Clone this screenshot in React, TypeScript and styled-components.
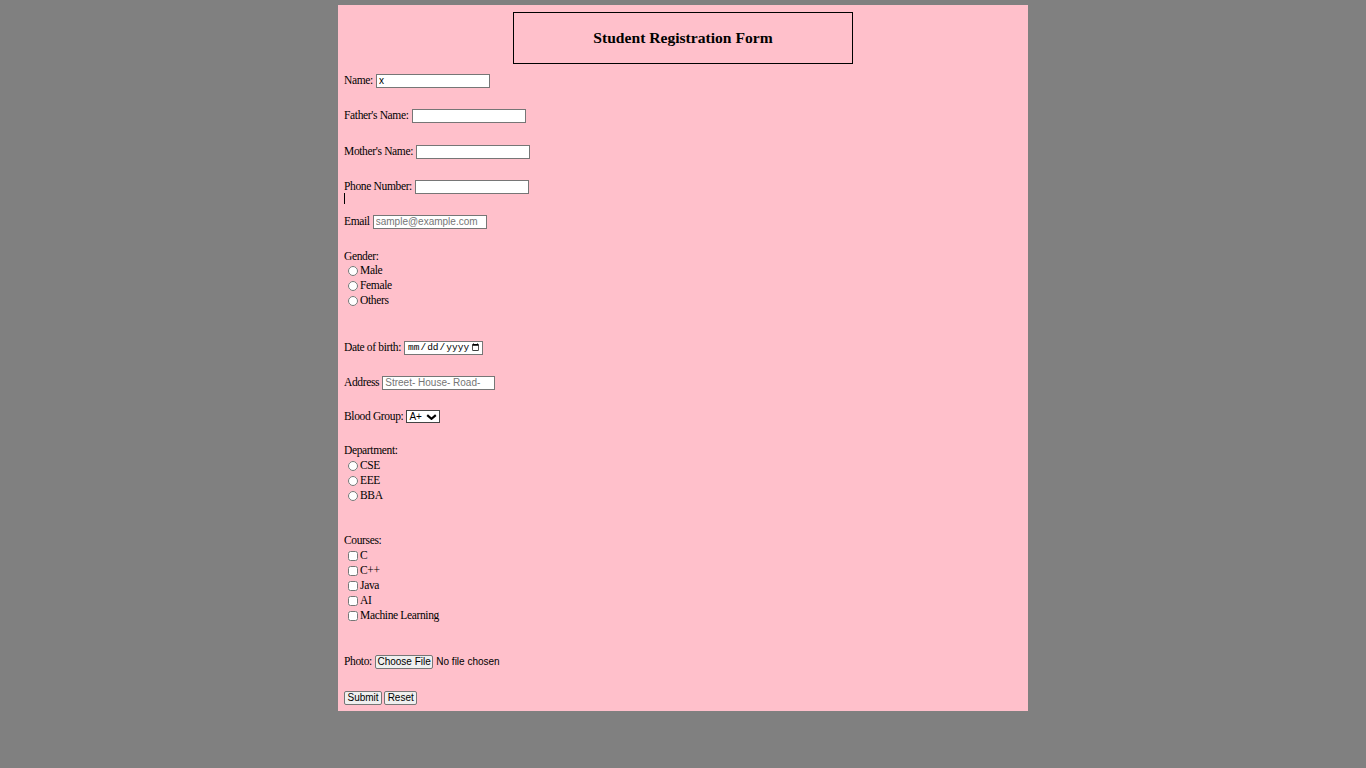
import * as React from "react";
import styled, { createGlobalStyle } from "styled-components";

const GlobalStyle = createGlobalStyle`
  html, body {
    margin: 0;
    padding: 0;
    background: #808080;
  }
  body {
    font-family: "Liberation Serif", "Times New Roman", serif;
    font-size: 11.5px;
    letter-spacing: -0.35px;
    color: #000;
  }
`;

const bloodGroups = ["A+", "A-", "B+", "B-", "O+", "O-", "AB+", "AB-"];
const genders = ["Male", "Female", "Others"];
const departments = ["CSE", "EEE", "BBA"];
const courses = ["C", "C++", "Java", "AI", "Machine Learning"];

export default function App() {
  return (
    <>
      <GlobalStyle />
      <Page>
        <TitleBox>
          <Title>Student Registration Form</Title>
        </TitleBox>
        <Form onSubmit={(e) => e.preventDefault()}>
          <Row $mt={9}>
            <Label>Name:</Label>
            <TextInput type="text" defaultValue="x" $w={114} />
          </Row>
          <Row $mt={20}>
            <Label>Father's Name:</Label>
            <TextInput type="text" $w={114} />
          </Row>
          <Row $mt={21}>
            <Label>Mother's Name:</Label>
            <TextInput type="text" $w={114} />
          </Row>
          <Row $mt={20}>
            <Label>Phone Number:</Label>
            <TextInput type="text" $w={114} />
          </Row>
          <Caret />
          <Row $mt={10}>
            <Label>Email</Label>
            <TextInput type="email" placeholder="sample@example.com" $w={114} />
          </Row>

          <GroupLabel $mt={20} $h={14}>Gender:</GroupLabel>
          {genders.map((g) => (
            <OptionRow key={g}>
              <Radio type="radio" name="gender" value={g} />
              <span>{g}</span>
            </OptionRow>
          ))}

          <Row $mt={32}>
            <Label>Date of birth:</Label>
            <DateInput type="date" />
          </Row>
          <Row $mt={20}>
            <Label>Address</Label>
            <TextInput type="text" placeholder="Street- House- Road-" $w={113} />
          </Row>
          <Row $mt={19}>
            <Label>Blood Group:</Label>
            <SelectWrap>
              <Select defaultValue="A+">
                {bloodGroups.map((b) => (
                  <option key={b}>{b}</option>
                ))}
              </Select>
              <Chevron viewBox="0 0 11 6" aria-hidden="true">
                <path d="M1.2 1.2 L5.5 4.8 L9.8 1.2" fill="none" stroke="#000" strokeWidth="2.2" />
              </Chevron>
            </SelectWrap>
          </Row>

          <GroupLabel $mt={19} $h={15}>Department:</GroupLabel>
          {departments.map((d) => (
            <OptionRow key={d}>
              <Radio type="radio" name="department" value={d} />
              <span>{d}</span>
            </OptionRow>
          ))}

          <GroupLabel $mt={30} $h={15}>Courses:</GroupLabel>
          {courses.map((c) => (
            <OptionRow key={c}>
              <Check type="checkbox" value={c} />
              <span>{c}</span>
            </OptionRow>
          ))}

          <Row $mt={31}>
            <Label>Photo:</Label>
            <FileInput type="file" />
          </Row>
          <Buttons $mt={21}>
            <Button type="submit">Submit</Button>
            <Button type="reset">Reset</Button>
          </Buttons>
        </Form>
      </Page>
    </>
  );
}

// styled components
const Page = styled.div`
  box-sizing: border-box;
  width: 690px;
  margin: 5px auto 0;
  padding: 7px 6px 6px;
  background: #ffc0cb;
`;

const TitleBox = styled.div`
  box-sizing: border-box;
  width: 340px;
  height: 52px;
  margin: 0 auto;
  border: 1px solid #000;
  display: flex;
  align-items: center;
  justify-content: center;
`;

const Title = styled.h3`
  margin: 0;
  font-size: 15.6px;
  font-weight: bold;
  letter-spacing: 0;
`;

const Form = styled.form`
  display: flex;
  flex-direction: column;
  align-items: flex-start;
`;

const Row = styled.div<{ $mt: number }>`
  display: flex;
  align-items: center;
  gap: 3px;
  height: 15px;
  margin-top: ${(p) => p.$mt}px;
  white-space: nowrap;
`;

const Label = styled.span`
  margin-bottom: 2px;
`;

const Buttons = styled(Row)`
  gap: 2px;
`;

const GroupLabel = styled.div<{ $mt: number; $h: number }>`
  height: ${(p) => p.$h}px;
  line-height: ${(p) => p.$h}px;
  margin-top: ${(p) => p.$mt}px;
`;

const OptionRow = styled.label`
  display: flex;
  align-items: center;
  height: 15px;
  line-height: 15px;
`;

const Caret = styled.span`
  display: block;
  width: 1px;
  height: 11px;
  margin-top: -1px;
  background: #000;
`;

const fieldBase = `
  box-sizing: border-box;
  height: 14px;
  margin: 0;
  padding: 0 2px;
  border: 1px solid #767676;
  background: #fff;
  font-family: "Liberation Sans", Arial, sans-serif;
  font-size: 10px;
  letter-spacing: 0;
  color: #000;
  &::placeholder {
    color: #757575;
  }
`;

const TextInput = styled.input<{ $w: number }>`
  ${fieldBase}
  width: ${(p) => p.$w}px;
`;

const DateInput = styled.input`
  ${fieldBase}
  width: 79px;
  font-family: "Liberation Mono", monospace;
  font-size: 9.5px;
  &::-webkit-calendar-picker-indicator {
    margin: 0;
    padding: 0;
    width: 9px;
    height: 9px;
  }
`;

const SelectWrap = styled.span`
  position: relative;
  display: inline-flex;
`;

const Select = styled.select`
  appearance: none;
  box-sizing: border-box;
  width: 34px;
  height: 13px;
  margin: 0;
  padding: 0 0 0 2px;
  border: 1px solid #444;
  border-radius: 0;
  font-family: "Liberation Sans", Arial, sans-serif;
  font-size: 10px;
  letter-spacing: 0;
  line-height: 11px;
  background: #fff;
  color: #000;
`;

const Chevron = styled.svg`
  position: absolute;
  right: 3px;
  top: 4px;
  width: 11px;
  height: 6px;
  pointer-events: none;
`;

const Radio = styled.input`
  width: 10px;
  height: 10px;
  margin: 0 2px 0 4px;
`;

const Check = styled.input`
  width: 10px;
  height: 10px;
  margin: 0 2px 0 4px;
`;

const buttonBase = `
  box-sizing: border-box;
  height: 14px;
  margin: 0;
  padding: 0 2.5px;
  border: 1px solid #767676;
  border-radius: 2px;
  background: #efefef;
  color: #000;
  font-family: "Liberation Sans", Arial, sans-serif;
  font-size: 10px;
  letter-spacing: 0;
  line-height: 12px;
`;

const Button = styled.button`
  ${buttonBase}
`;

const FileInput = styled.input`
  font-family: "Liberation Sans", Arial, sans-serif;
  font-size: 10px;
  letter-spacing: 0;
  color: #000;
  &::file-selector-button {
    ${buttonBase}
    padding: 0 1.5px;
    margin-right: 3px;
  }
`;
